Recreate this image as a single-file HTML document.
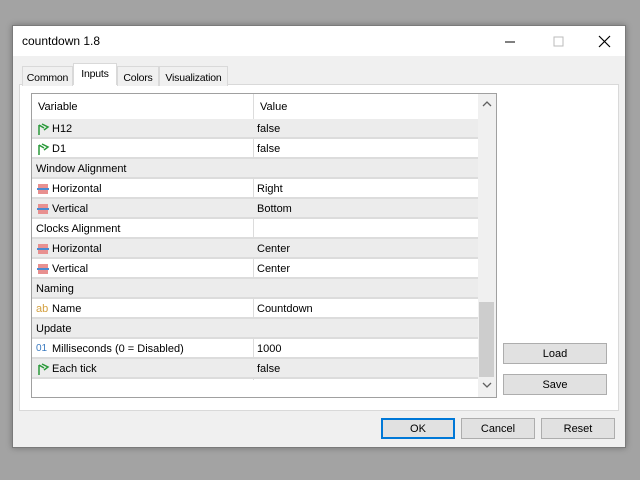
<!DOCTYPE html>
<html><head><style>
*{margin:0;padding:0;box-sizing:border-box}
body{width:640px;height:480px;background:#a3a3a3;font-family:"Liberation Sans",sans-serif;font-size:11px;color:#000;position:relative;overflow:hidden}
.abs{position:absolute}
#dlg{left:12px;top:25px;width:614px;height:423px;background:#f0f0f0;border:1px solid #7a7a7a;box-shadow:0 0 6px rgba(0,0,0,.3)}
#title{left:0;top:0;width:612px;height:30px;background:#fff}
.tab{top:40px;height:20px;border:1px solid #d9d9d9;border-bottom:none;background:#f0f0f0;padding:5px 0 0;font-size:10.5px;text-align:center;letter-spacing:-0.2px}
#panel{left:6px;top:58px;width:600px;height:327px;background:#fff;border:1px solid #d9d9d9}
#list{left:18px;top:67px;width:466px;height:305px;border:1px solid #a0a0a0;background:#fff}
.row{position:absolute;left:0;width:446px;height:20px;border-bottom:2px solid #dcdcdc}
.row span{position:absolute;top:4px}
.g{background:#ececec}
.c1{left:20px}.c0{left:4px}.c2{left:225px}
.sep{position:absolute;left:221px;top:0;width:1px;height:286px;background:#dcdcdc}
.btn{height:21px;background:#e1e1e1;border:1px solid #adadad;text-align:center;line-height:20px;font-size:11px}
.ico{position:absolute;left:4px;top:3px}
</style></head><body>
<div id="dlg" class="abs">
 <div id="title" class="abs"><span class="abs" style="left:9px;top:8px;font-size:12px">countdown 1.8</span>
  <svg class="abs" style="left:488px;top:8px" width="120" height="16"><line x1="4" y1="8" x2="14" y2="8" stroke="#000"/><rect x="53" y="3" width="9" height="9" fill="none" stroke="#bbb"/><path d="M98 2L109 13M109 2L98 13" stroke="#000" stroke-width="1.2"/></svg>
 </div>
 <div id="panel" class="abs"></div>
 <div class="tab abs" style="left:9px;top:40px;width:51px">Common</div>
 <div class="tab abs" style="left:60px;top:37px;height:22px;width:44px;background:#fff;border-color:#d9d9d9;padding-top:4px">Inputs</div>
 <div class="tab abs" style="left:104px;width:42px">Colors</div>
 <div class="tab abs" style="left:146px;width:69px">Visualization</div>
 <div id="list" class="abs">
  <div class="row" style="top:0;height:25px;border:none"><span class="c0" style="top:7px;left:6px">Variable</span><span class="c2" style="top:7px;left:228px">Value</span></div>
  <div class="sep"></div>
  <div class="row g" style="top:25px"><svg class="ico" width="14" height="14"><path d="M3 13V3M3 3L8 6M6 2L12 5L8 8" stroke="#2a9a3a" stroke-width="1.5" fill="none"/></svg><span class="c1">H12</span><span class="c2">false</span></div>
  <div class="row" style="top:45px"><svg class="ico" width="14" height="14"><path d="M3 13V3M3 3L8 6M6 2L12 5L8 8" stroke="#2a9a3a" stroke-width="1.5" fill="none"/></svg><span class="c1">D1</span><span class="c2">false</span></div>
  <div class="row g" style="top:65px"><span class="c0">Window Alignment</span></div>
  <div class="row" style="top:85px"><svg class="ico" width="14" height="14"><rect x="2" y="2" width="10" height="4" fill="#e89090"/><rect x="1" y="6" width="12" height="2" fill="#4a8ad0"/><rect x="2" y="8" width="10" height="4" fill="#e89090"/></svg><span class="c1">Horizontal</span><span class="c2">Right</span></div>
  <div class="row g" style="top:105px"><svg class="ico" width="14" height="14"><rect x="2" y="2" width="10" height="4" fill="#e89090"/><rect x="1" y="6" width="12" height="2" fill="#4a8ad0"/><rect x="2" y="8" width="10" height="4" fill="#e89090"/></svg><span class="c1">Vertical</span><span class="c2">Bottom</span></div>
  <div class="row" style="top:125px"><span class="c0">Clocks Alignment</span></div>
  <div class="row g" style="top:145px"><svg class="ico" width="14" height="14"><rect x="2" y="2" width="10" height="4" fill="#e89090"/><rect x="1" y="6" width="12" height="2" fill="#4a8ad0"/><rect x="2" y="8" width="10" height="4" fill="#e89090"/></svg><span class="c1">Horizontal</span><span class="c2">Center</span></div>
  <div class="row" style="top:165px"><svg class="ico" width="14" height="14"><rect x="2" y="2" width="10" height="4" fill="#e89090"/><rect x="1" y="6" width="12" height="2" fill="#4a8ad0"/><rect x="2" y="8" width="10" height="4" fill="#e89090"/></svg><span class="c1">Vertical</span><span class="c2">Center</span></div>
  <div class="row g" style="top:185px"><span class="c0">Naming</span></div>
  <div class="row" style="top:205px"><span class="c0" style="color:#d4a040">ab</span><span class="c1">Name</span><span class="c2">Countdown</span></div>
  <div class="row g" style="top:225px"><span class="c0">Update</span></div>
  <div class="row" style="top:245px"><span class="c0" style="color:#3a7ac0;font-size:10px">01</span><span class="c1">Milliseconds (0 = Disabled)</span><span class="c2">1000</span></div>
  <div class="row g" style="top:265px"><svg class="ico" width="14" height="14"><path d="M3 13V3M3 3L8 6M6 2L12 5L8 8" stroke="#2a9a3a" stroke-width="1.5" fill="none"/></svg><span class="c1">Each tick</span><span class="c2">false</span></div>
  <div class="abs" style="left:446px;top:0;width:18px;height:303px;background:#f0f0f0"></div>
  <div class="abs" style="left:447px;top:208px;width:15px;height:75px;background:#cdcdcd"></div>
  <svg class="abs" style="left:446px;top:0" width="18" height="303"><path d="M5 12L9 8L13 12" stroke="#606060" fill="none" stroke-width="1.3"/><path d="M5 289L9 293L13 289" stroke="#606060" fill="none" stroke-width="1.3"/></svg>
 </div>
 <div class="btn abs" style="left:490px;top:317px;width:104px">Load</div>
 <div class="btn abs" style="left:490px;top:348px;width:104px">Save</div>
 <div class="btn abs" style="left:368px;top:392px;width:74px;border:2px solid #0078d7;line-height:18px">OK</div>
 <div class="btn abs" style="left:448px;top:392px;width:74px">Cancel</div>
 <div class="btn abs" style="left:528px;top:392px;width:74px">Reset</div>
</div>
</body></html>
